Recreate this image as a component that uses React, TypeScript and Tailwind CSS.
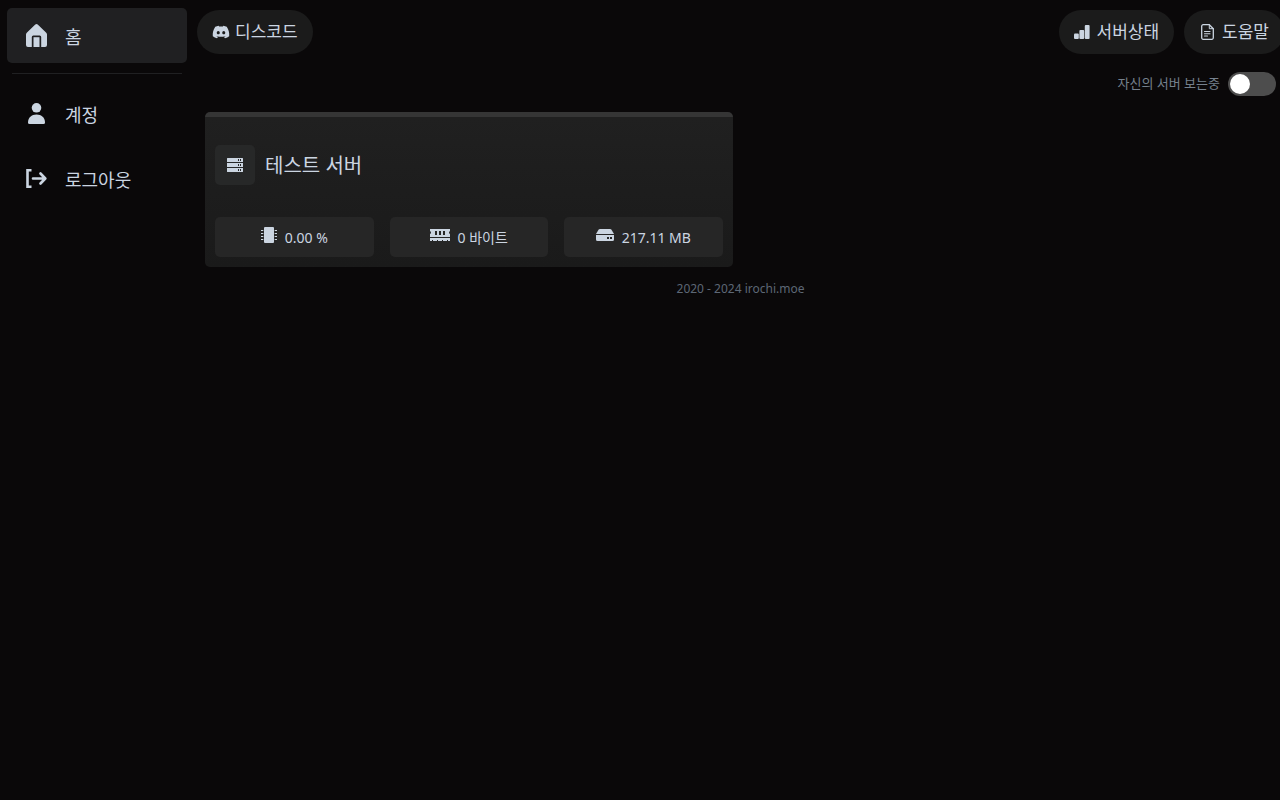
import { useState } from 'react';
import type { ReactNode } from 'react';
import { FaDiscord } from 'react-icons/fa';

function HomeIcon() {
  return (
    <svg width="21" height="23" viewBox="0 0 21 23" fill="currentColor" aria-hidden="true">
      <path d="M9.3.5Q10.5-.5 11.7.5L20 8.4Q21 9.4 21 10.5V21a2 2 0 0 1-2 2H15.200V13a1.500 1.500 0 0 0-1.500-1.500H7.300a1.500 1.500 0 0 0-1.500 1.500V23H2a2 2 0 0 1-2-2V10.500Q0 9.400 1 8.400Z" />
      <path d="M7.500 13.200h6V23H7.500Z" />
    </svg>
  );
}

function UserIcon() {
  return (
    <svg width="17" height="21" viewBox="0 0 17 21" fill="currentColor" aria-hidden="true">
      <circle cx="8.500" cy="4.800" r="4.800" />
      <path d="M0 19.500C0 14.500 3.500 11.500 8.500 11.500S17 14.500 17 19.500Q17 21 15.500 21H1.500Q0 21 0 19.500Z" />
    </svg>
  );
}

function LogoutIcon() {
  return (
    <svg
      width="21"
      height="19"
      viewBox="0 0 21 19"
      fill="none"
      stroke="currentColor"
      strokeWidth="2.600"
      aria-hidden="true"
    >
      <path d="M5.500 1.300H1.500V17.700H5.500" />
      <path d="M7 9.500H19M14.500 4.500L19.300 9.500L14.500 14.500" strokeLinecap="round" strokeLinejoin="round" />
    </svg>
  );
}

function BarsIcon() {
  return (
    <svg width="16" height="14" viewBox="0 0 16 14" fill="currentColor" aria-hidden="true">
      <rect x="0" y="8.500" width="4.800" height="5.500" rx="1" />
      <rect x="5.400" y="5" width="4.800" height="9" rx="1" />
      <rect x="10.800" y="0" width="4.800" height="14" rx="1" />
    </svg>
  );
}

function DocumentIcon() {
  return (
    <svg
      width="13"
      height="16"
      viewBox="0 0 13 16"
      fill="none"
      stroke="currentColor"
      strokeWidth="1.300"
      strokeLinecap="round"
      aria-hidden="true"
    >
      <path
        d="M8.300.7H2.200A1.500 1.500 0 0 0 .7 2.200V13.800A1.500 1.500 0 0 0 2.200 15.300H10.800A1.500 1.500 0 0 0 12.300 13.800V4.700Z"
        strokeLinejoin="round"
      />
      <path d="M8.300.7V4.700H12.300" strokeWidth="1" />
      <path d="M3.500 7.500H9M3.500 9.700H9M3.500 12H6.500" strokeWidth="1.100" />
    </svg>
  );
}

function ServerIcon() {
  return (
    <svg width="16" height="14" viewBox="0 0 16 14" fill="currentColor" fillRule="evenodd" aria-hidden="true">
      <path d="M0 .5Q0 0 .5 0H15.500Q16 0 16 .5V4H0ZM11 1h1v2h-1ZM13 1h1v2h-1Z" />
      <path d="M0 5H16V9H0ZM11 6h1v2h-1ZM13 6h1v2h-1Z" />
      <path d="M0 10H16V13.500Q16 14 15.500 14H.5Q0 14 0 13.500ZM11 11h1v2h-1ZM13 11h1v2h-1Z" />
    </svg>
  );
}

function ChipIcon() {
  return (
    <svg width="16" height="16" viewBox="0 0 16 16" fill="currentColor" aria-hidden="true">
      <rect x="3" y="0" width="10" height="16" rx="1" />
      <path
        d="M0 3.500H2.300M0 6.500H2.300M0 9.500H2.300M0 12.500H2.300M13.700 3.500H16M13.700 6.500H16M13.700 9.500H16M13.700 12.500H16"
        stroke="currentColor"
        strokeWidth="1"
      />
    </svg>
  );
}

function MemoryIcon() {
  return (
    <svg width="20" height="12" viewBox="0 0 20 12" fill="currentColor" fillRule="evenodd" aria-hidden="true">
      <path d="M0 0H20V2Q19 2.500 19 3.500T20 5V8H0V5Q1 4.500 1 3.500T0 2ZM5 2V6H7V2ZM9 2V6H11V2ZM13 2V6H15V2Z" />
      <path d="M0 9H20V12H18V11H17V12H13V11H12V12H8V11H7V12H3V11H2V12H0Z" />
    </svg>
  );
}

function DriveIcon() {
  return (
    <svg width="18" height="12" viewBox="0 0 18 12" fill="currentColor" fillRule="evenodd" aria-hidden="true">
      <path d="M4 0H14Q15 0 15.500.8L18 5H0L2.500.8Q3 0 4 0Z" />
      <path d="M0 6H18V10.500Q18 12 16.500 12H1.500Q0 12 0 10.500ZM11 8V10H13V8ZM14 8V10H16V8Z" />
    </svg>
  );
}

function NavItem({ icon, label, active = false }: { icon: ReactNode; label: string; active?: boolean }) {
  return (
    <a
      href="#"
      aria-current={active ? 'page' : undefined}
      className={
        active
          ? 'flex h-[55px] items-center gap-[15px] rounded-[5px] bg-[#202022] px-[15px]'
          : 'flex h-[55px] items-center gap-[15px] rounded-[5px] px-[15px]'
      }
    >
      <span className="flex w-7 justify-center">{icon}</span>
      <span className="pt-[2px] text-lg">{label}</span>
    </a>
  );
}

function PillLink({ icon, label }: { icon: ReactNode; label: string }) {
  return (
    <a href="#" className="flex h-11 items-center gap-[6px] rounded-full bg-[#1b1b1b] px-[15px] text-[17px]">
      <span className="flex w-[17px] justify-center">{icon}</span>
      {label}
    </a>
  );
}

function Stat({ icon, value }: { icon: ReactNode; value: string }) {
  return (
    <div className="flex h-10 items-center justify-center gap-2 rounded-[5px] bg-[#262626] text-sm">
      <span className="pb-1">{icon}</span>
      <span className="pt-[2px]">{value}</span>
    </div>
  );
}

export default function App() {
  const [own, setOwn] = useState(false);
  return (
    <div className="flex min-h-screen overflow-hidden bg-[#0a0809] font-['Noto_Sans','Noto_Sans_CJK_KR',sans-serif] text-[#cbd5e1]">
      <nav className="w-[187px] shrink-0 pt-2 pl-[7px]">
        <NavItem icon={<HomeIcon />} label="홈" active />
        <hr className="mx-[5px] mt-[10px] mb-3 border-[#202022]" />
        <div className="flex flex-col gap-[10px]">
          <NavItem icon={<UserIcon />} label="계정" />
          <NavItem icon={<LogoutIcon />} label="로그아웃" />
        </div>
      </nav>
      <main className="-mr-1 ml-[10px] min-w-0 flex-1 pt-[10px]">
        <header className="flex gap-[10px]">
          <PillLink icon={<FaDiscord size={18} className="shrink-0" />} label="디스코드" />
          <div className="ml-auto flex gap-[10px]">
            <PillLink icon={<BarsIcon />} label="서버상태" />
            <PillLink icon={<DocumentIcon />} label="도움말" />
          </div>
        </header>
        <div className="px-2">
          <label className="mt-[18px] flex h-6 items-center justify-end gap-2 text-[13px] text-[#75808d]">
            자신의 서버 보는중
            <input
              type="checkbox"
              role="switch"
              checked={own}
              onChange={(e) => setOwn(e.target.checked)}
              className="h-6 w-12 appearance-none rounded-full bg-[#4d4d4d] p-[2px] before:block before:size-5 before:rounded-full before:bg-white checked:before:ml-6"
            />
          </label>
          <section className="mt-4 grid grid-cols-2 gap-4">
            <article className="rounded-[5px] border-t-[5px] border-[#353535] bg-linear-to-b from-[#202020] to-[#1a1a1a] px-[10px] pt-7 pb-[10px]">
              <div className="flex items-center gap-[10px]">
                <span className="flex size-10 items-center justify-center rounded-[5px] bg-[#272828]">
                  <ServerIcon />
                </span>
                <h2 className="pt-[2px] text-xl">테스트 서버</h2>
              </div>
              <div className="mt-8 grid grid-cols-3 gap-4">
                <Stat icon={<ChipIcon />} value="0.00 %" />
                <Stat icon={<MemoryIcon />} value="0 바이트" />
                <Stat icon={<DriveIcon />} value="217.11 MB" />
              </div>
            </article>
          </section>
        </div>
        <footer className="mt-3 text-center text-xs leading-5 text-[#5d6775]">2020 - 2024 irochi.moe</footer>
      </main>
    </div>
  );
}
